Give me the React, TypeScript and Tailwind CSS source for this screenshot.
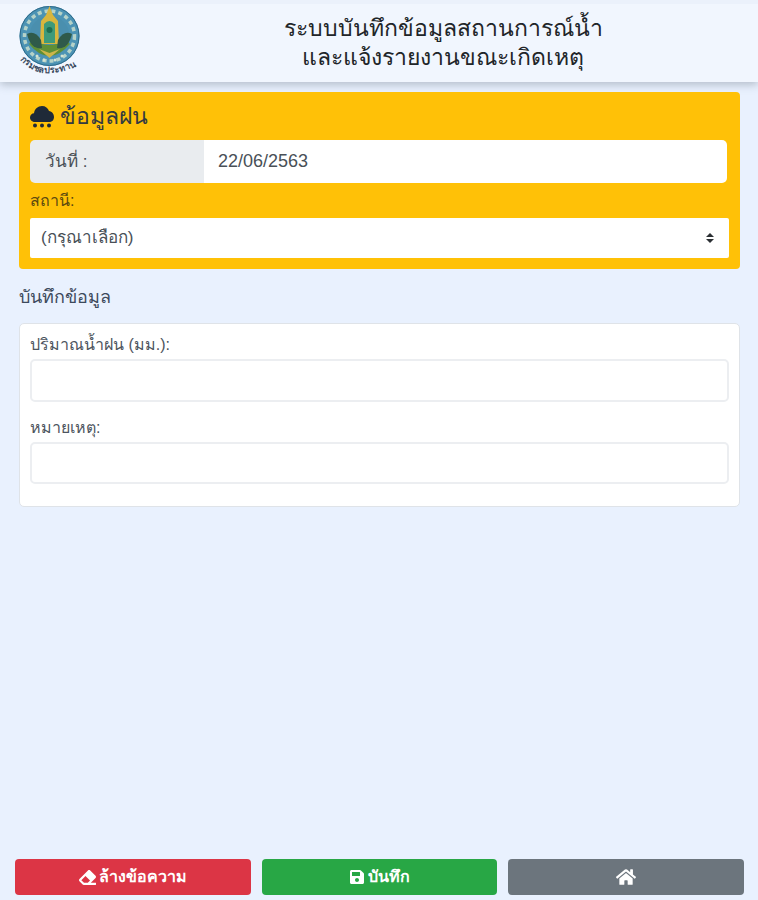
import { FaEraser, FaSave, FaHome } from "react-icons/fa";

const font = { fontFamily: '"Liberation Sans", "Noto Sans", sans-serif' };

function Logo() {
  return (
    <svg width="66" height="76" viewBox="0 5 66 76" className="shrink-0">
      <defs>
        <path id="arc" d="M3 60 Q 26 84 63 64" fill="none" />
      </defs>
      <circle cx="32.5" cy="36" r="30" fill="#4c93b4" />
      <circle cx="32.5" cy="36" r="29.5" fill="none" stroke="#2d6a8a" strokeWidth="1" />
      <circle cx="32.5" cy="36" r="25" fill="none" stroke="#b5d2c8" strokeWidth="3.5" strokeDasharray="4 3" />
      <circle cx="32.5" cy="36" r="20" fill="#4a8fae" />
      <path d="M12 44 Q32 68 53 44 L49 40 Q32 50 16 40 Z" fill="#5f8f36" />
      <path d="M32.5 6 L36 15 L41 21 L42 44 L23 44 L24 21 L29 15 Z" fill="#d9b63e" />
      <path d="M27 24 Q32.5 18 38 24 L38 43 L27 43 Z" fill="#3f9a7a" />
      <circle cx="32.5" cy="30" r="3" fill="#1f6e53" />
      <path d="M10 34 Q18 30 24 40 L25 48 Q14 50 10 34 Z" fill="#2f5a4a" />
      <path d="M55 34 Q47 30 41 40 L40 48 Q51 50 55 34 Z" fill="#2f5a4a" />
      <path d="M22 49 L32.5 53 L43 49 L32.5 58 Z" fill="#cdb54a" />
      <g fill="#d5e3d2">
        <circle cx="20" cy="56" r="1.5" /><circle cx="27" cy="60" r="1.5" /><circle cx="38" cy="60" r="1.5" /><circle cx="45" cy="56" r="1.5" />
      </g>
      <text fontSize="9" fontWeight="700" fill="#3a4a5e">
        <textPath href="#arc">กรมชลประทาน</textPath>
      </text>
    </svg>
  );
}

function RainCloud() {
  return (
    <svg width="24" height="23" viewBox="0 0 24 23" className="shrink-0">
      <path d="M5 17 C1.5 17 0 14.5 0 12.5 C0 10 2 8.3 4 8.2 C4.5 4 8 1 12 1 C15.5 1 18 3 19 6 C22 6.5 24 9 24 12 C24 15 22 17 19 17 Z" fill="#1f2a38" />
      <circle cx="5" cy="20.5" r="2" fill="#1f2a38" />
      <circle cx="12" cy="20.5" r="2" fill="#1f2a38" />
      <circle cx="19" cy="20.5" r="2" fill="#1f2a38" />
    </svg>
  );
}

function Btn({ color, children }: { color: string; children: React.ReactNode }) {
  return (
    <button className={`flex h-[36px] flex-1 items-center justify-center gap-[3px] rounded-[4px] text-[16px] font-bold text-white ${color}`}>
      {children}
    </button>
  );
}

export default function App() {
  return (
    <div className="flex h-[900px] w-[758px] flex-col overflow-hidden bg-[#e9f1fe] text-[#212529]" style={font}>
      <header className="flex h-[82px] items-center border-t-4 border-[#ebf1fb] bg-[#f1f6fe] pl-[17px] shadow-[0_3px_8px_rgba(120,130,145,0.45)]">
        <Logo />
        <h1 className="flex-1 pl-[45px] text-center text-[23px] leading-[29px] text-[#212529]">
          ระบบบันทึกข้อมูลสถานการณ์น้ำ
          <br />
          และแจ้งรายงานขณะเกิดเหตุ
        </h1>
      </header>

      <main className="flex flex-1 flex-col pl-[19px] pr-[18px] pt-[10px]">
        <section className="rounded-[4px] bg-[#ffc107] pb-[11px] pl-[11px] pr-[11px] pt-[8px]">
          <h2 className="flex h-[40px] items-center gap-[6px] pb-[8px] text-[23px] leading-none text-[#343a40]">
            <RainCloud />
            ข้อมูลฝน
          </h2>
          <div className="flex h-[43px] pr-[2px]">
            <div className="flex w-[174px] items-center rounded-l-[5px] bg-[#e9ecef] pl-[15px] text-[17px] text-[#495057]">วันที่ :</div>
            <div className="flex flex-1 items-center rounded-r-[5px] bg-white pl-[14px] text-[18px] text-[#495057]">22/06/2563</div>
          </div>
          <label className="block pb-[5px] pt-[6px] text-[16px] leading-[24px] text-[#5c4a10]">สถานี:</label>
          <div className="flex h-[40px] items-center justify-between rounded-[2px] bg-white pl-[11px] pr-[14px] text-[17px] text-[#495057]">
            <span>(กรุณาเลือก)</span>
            <svg width="10" height="14" viewBox="0 0 10 14">
              <path d="M5 2 L9 6 H1 Z M5 12 L1 8 H9 Z" fill="#2b2f33" />
            </svg>
          </div>
        </section>

        <h3 className="pb-[14px] pt-[16px] text-[18px] leading-[24px] text-[#3d4a5c]">บันทึกข้อมูล</h3>

        <section className="h-[184px] rounded-[5px] border border-[#dfe3e8] bg-white pl-[10px] pr-[10px] pt-[9px]">
          <label className="block pb-[2px] text-[16px] leading-[24px] text-[#4d5560]">ปริมาณน้ำฝน (มม.):</label>
          <div className="h-[43px] rounded-[5px] border-2 border-[#eceef1] bg-white" />
          <label className="block pb-[2px] pt-[14px] text-[16px] leading-[24px] text-[#4d5560]">หมายเหตุ:</label>
          <div className="h-[42px] rounded-[5px] border-2 border-[#eceef1] bg-white" />
        </section>

        <div className="flex-1" />
      </main>

      <footer className="flex gap-[11px] pb-[5px] pl-[15px] pr-[14px]">
        <Btn color="bg-[#dc3545]">
          <FaEraser className="text-[17px]" />
          ล้างข้อความ
        </Btn>
        <Btn color="bg-[#28a745]">
          <FaSave className="text-[16px]" />
          บันทึก
        </Btn>
        <Btn color="bg-[#6c757d]">
          <FaHome className="text-[20px]" />
        </Btn>
      </footer>
    </div>
  );
}
